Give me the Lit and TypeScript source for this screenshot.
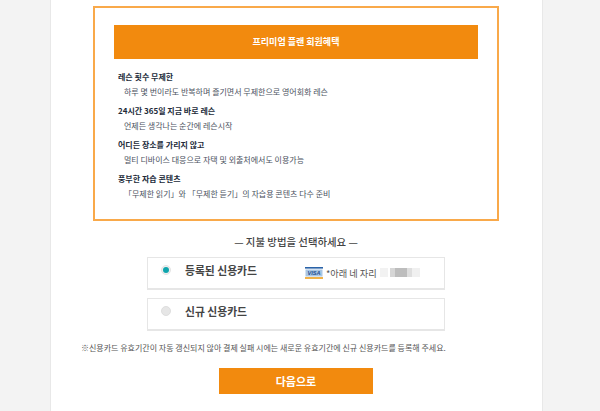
import { LitElement, html, css } from "lit";
import { customElement } from "lit/decorators.js";

const BENEFITS = [
  ["레슨 횟수 무제한", "하루 몇 번이라도 반복하며 즐기면서 무제한으로 영어회화 레슨"],
  ["24시간 365일 지금 바로 레슨", "언제든 생각나는 순간에 레슨시작"],
  ["어디든 장소를 가리지 않고", "멀티 디바이스 대응으로 자택 및 외출처에서도 이용가능"],
  ["풍부한 자습 콘텐츠", "「무제한 읽기」와 「무제한 듣기」의 자습용 콘텐츠 다수 준비"],
];

@customElement("app-root")
export class AppRoot extends LitElement {
  static styles = css`
    :host {
      display: block;
      width: 600px;
      height: 411px;
      overflow: hidden;
      background: #f3f3f3;
      font-family: "Noto Sans CJK KR", "Noto Sans", sans-serif;
    }
    .card {
      box-sizing: border-box;
      width: 493px;
      height: 411px;
      margin-left: 50px;
      background: #fff;
      border-left: 1px solid #e8e8e8;
      border-right: 1px solid #e8e8e8;
      padding-top: 6px;
      display: flex;
      flex-direction: column;
      align-items: flex-start;
    }
    .box {
      box-sizing: border-box;
      width: 406px;
      height: 215px;
      margin-left: 42px;
      border: 2px solid #f9a94a;
      padding: 17px 19px 0;
    }
    .banner {
      height: 34px;
      background: #f28a0e;
      color: #fff;
      font-size: 9px;
      line-height: 34px;
      font-weight: 700;
      text-align: center;
    }
    .benefits {
      margin-top: 10px;
      padding-left: 4px;
      display: flex;
      flex-direction: column;
      gap: 6px;
    }
    .benefit-title {
      font-size: 8px;
      line-height: 15px;
      font-weight: 700;
      color: #222b3a;
    }
    .benefit-desc {
      font-size: 8px;
      line-height: 11px;
      color: #4a5160;
      padding: 2px 0 0 6px;
    }
    .heading {
      width: 406px;
      margin: 14px 0 0 42px;
      text-align: center;
      font-size: 10.4px;
      line-height: 14px;
      font-weight: 500;
      color: #444;
    }
    .options {
      margin: 8px 0 0 96px;
      display: flex;
      flex-direction: column;
      gap: 8px;
    }
    .option {
      box-sizing: border-box;
      width: 298px;
      height: 33px;
      border: 1px solid #e6e6e6;
      border-bottom-width: 2px;
      padding: 0 0 7px 13px;
      display: flex;
      align-items: center;
    }
    .radio {
      box-sizing: border-box;
      width: 10px;
      height: 10px;
      border-radius: 50%;
      background: #e6e6e6;
      border: 1px solid #dedede;
      flex: none;
      display: flex;
      align-items: center;
      justify-content: center;
    }
    .radio.on {
      background: #f0f0f0;
      border-color: #e4e4e4;
    }
    .radio.on::after {
      content: "";
      width: 6px;
      height: 6px;
      border-radius: 50%;
      background: #0fa5ad;
    }
    .label {
      margin-left: 14px;
      width: 120px;
      font-size: 10.8px;
      font-weight: 700;
      color: #444;
    }
    .visa {
      display: block;
      flex: none;
      margin-top: 6px;
    }
    .digits {
      margin: 6px 0 0 3px;
      font-size: 9.2px;
      color: #555;
      white-space: nowrap;
    }
    .masked {
      width: 40px;
      height: 9px;
      margin: 6px 0 0 3px;
      background: linear-gradient(
        90deg,
        #f2f2f2 0 8px,
        #fff 8px 10px,
        #d6d6d6 10px 15px,
        #bdbdbd 15px 27px,
        #dedede 27px 32px,
        #f0f0f0 32px 40px
      );
    }
    .note {
      width: 400px;
      margin: 11px 0 0 30px;
      font-size: 8px;
      line-height: 12px;
      color: #555;
      white-space: nowrap;
    }
    .next {
      margin: 14px 0 0 168px;
      box-sizing: border-box;
      width: 154px;
      height: 26px;
      border: none;
      background: #f28a0e;
      color: #fff;
      font: 700 11px "Noto Sans CJK KR", "Noto Sans", sans-serif;
      padding: 0;
    }
  `;

  render() {
    return html`
      <div class="card">
        <section class="box">
          <div class="banner">프리미엄 플랜 회원혜택</div>
          <div class="benefits">
            ${BENEFITS.map(
              ([t, d]) => html`<div>
                <div class="benefit-title">${t}</div>
                <div class="benefit-desc">${d}</div>
              </div>`
            )}
          </div>
        </section>
        <div class="heading">— 지불 방법을 선택하세요 —</div>
        <div class="options">
          <div class="option">
            <span class="radio on"></span>
            <span class="label">등록된 신용카드</span>
            <svg class="visa" width="18" height="12" viewBox="0 0 18 12">
              <rect width="18" height="12" fill="#fff"/>
              <rect width="18" height="1.6" fill="#2a63a8"/>
              <rect y="10" width="18" height="2" fill="#f0b24a"/>
              <rect x="0.5" y="2.5" width="17" height="7" fill="#a9c6e4"/>
              <text x="9" y="8.4" font-size="5.6" font-weight="700" font-style="italic" font-family="Liberation Sans" fill="#1f4f92" text-anchor="middle">VISA</text>
            </svg>
            <span class="digits">*아래 네 자리</span>
            <span class="masked"></span>
          </div>
          <div class="option">
            <span class="radio"></span>
            <span class="label">신규 신용카드</span>
          </div>
        </div>
        <div class="note">※신용카드 유효기간이 자동 갱신되지 않아 결제 실패 시에는 새로운 유효기간에 신규 신용카드를 등록해 주세요.</div>
        <button class="next">다음으로</button>
      </div>
    `;
  }
}
